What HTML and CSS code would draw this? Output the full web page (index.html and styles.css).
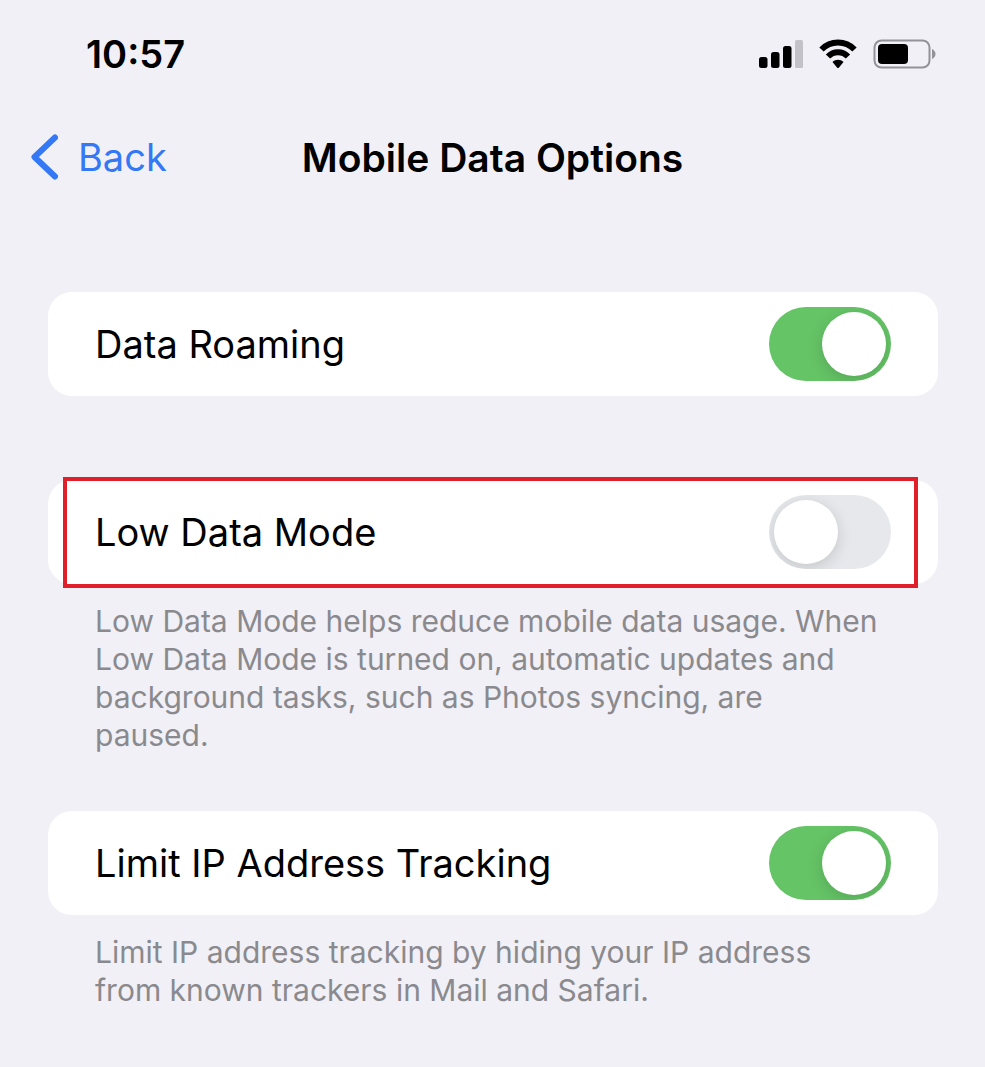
FILE: index.html
```html
<!DOCTYPE html>
<html lang="en">
<head>
    <meta charset="UTF-8">
    <meta name="viewport" content="width=device-width, initial-scale=1.0">
    <title>Mobile Data Options</title>
    <link rel="stylesheet" href="styles.css">
</head>
<body>
    <div class="status-bar">
        <time class="clock">10:57</time>
        <div class="status-icons">
            <svg class="signal" width="44" height="28" viewBox="0 0 44 28" aria-hidden="true">
                <rect x="0" y="17" width="8.500" height="11" rx="2.500"/>
                <rect x="12" y="12" width="8.500" height="16" rx="2.500"/>
                <rect x="24" y="6" width="8.500" height="22" rx="2.500"/>
                <rect class="signal-off" x="36" y="0" width="8" height="28" rx="1.500"/>
            </svg>
            <svg class="wifi" width="38" height="30" viewBox="0 0 38 30" aria-hidden="true">
                <path class="wifi-arc" d="M2.500 10.500 C11.500 1.200 26.500 1.200 35.500 10.500"/>
                <path class="wifi-arc" d="M9 17.500 C14.500 11.800 23.500 11.800 29 17.500"/>
                <path d="M13.500 23 C16.500 19.900 21.500 19.900 24.500 23 L20 28.500 Q19 29.500 18 28.500 Z"/>
            </svg>
            <svg class="battery" width="63" height="30" viewBox="0 0 63 30" aria-hidden="true">
                <rect class="battery-case" x="1.500" y="1.500" width="55" height="27" rx="7"/>
                <rect x="5" y="5" width="30" height="20" rx="4"/>
                <path class="battery-tip" d="M59 10 Q62.500 12 62.500 15 Q62.500 18 59 20 Z"/>
            </svg>
        </div>
    </div>

    <header class="nav-bar">
        <button type="button" class="back">
            <svg width="28" height="46" viewBox="0 0 28 46" aria-hidden="true">
                <path d="M25 3.500 L4.500 23 L25 42.500"/>
            </svg>
            Back
        </button>
        <h1>Mobile Data Options</h1>
    </header>

    <main class="settings">
        <section class="group">
            <div class="card">
                <label for="roaming">Data Roaming</label>
                <input type="checkbox" role="switch" class="switch" id="roaming" checked>
            </div>
        </section>

        <section class="group">
            <div class="card highlighted">
                <label for="low-data">Low Data Mode</label>
                <input type="checkbox" role="switch" class="switch" id="low-data">
            </div>
            <p class="note">Low Data Mode helps reduce mobile data usage. When Low Data Mode is turned on, automatic updates and background tasks, such as Photos syncing, are paused.</p>
        </section>

        <section class="group">
            <div class="card">
                <label for="limit-ip">Limit IP Address Tracking</label>
                <input type="checkbox" role="switch" class="switch" id="limit-ip" checked>
            </div>
            <p class="note">Limit IP address tracking by hiding your IP address from known trackers in Mail and Safari.</p>
        </section>
    </main>
</body>
</html>
```

FILE: styles.css
```css
* {
    box-sizing: border-box;
}
body {
    margin: 0;
    background-color: #f1f0f6;
    color: #000;
    font-family: Inter, "Liberation Sans", sans-serif;
    font-size: 38px;
}
.status-bar {
    display: flex;
    justify-content: space-between;
    align-items: center;
    height: 108px;
    padding: 0 49px 0 86px;
}
.clock {
    font-weight: 600;
}
.status-icons {
    display: flex;
    align-items: center;
    gap: 16px;
}
.signal-off {
    fill: #c3c2c8;
}
.wifi-arc {
    fill: none;
    stroke: #000;
    stroke-width: 6;
}
.battery-case {
    fill: none;
    stroke: #939298;
    stroke-width: 2;
}
.battery-tip {
    fill: #939298;
}
.nav-bar {
    display: grid;
    grid-template-columns: 1fr auto 1fr;
    align-items: center;
    height: 98px;
    padding: 0 30px;
}
.back {
    display: flex;
    justify-self: start;
    align-items: center;
    gap: 20px;
    padding: 0;
    border: none;
    background: none;
    color: #3478f6;
    font: inherit;
    cursor: pointer;
}
.back path {
    fill: none;
    stroke: #3478f6;
    stroke-width: 6;
    stroke-linecap: round;
    stroke-linejoin: round;
}
h1 {
    margin: 0;
    font-size: 39px;
    font-weight: 600;
}
.settings {
    padding: 86px 47px 48px 48px;
}
.group + .group {
    margin-top: 84px;
}
.group:has(.note) + .group {
    margin-top: 57px;
}
.card {
    position: relative;
    display: flex;
    justify-content: space-between;
    align-items: center;
    height: 104px;
    padding: 0 47px;
    border-radius: 24px;
    background-color: #fff;
}
.highlighted::after {
    content: "";
    position: absolute;
    inset: -3px 20px -4px 15px;
    border: 4px solid #e01f2b;
    pointer-events: none;
}
.switch {
    appearance: none;
    display: flex;
    width: 122px;
    height: 74px;
    margin: 0;
    padding: 5px;
    border-radius: 37px;
    background-color: #e7e8eb;
    overflow: hidden;
    cursor: pointer;
}
.switch::before {
    content: "";
    width: 64px;
    height: 64px;
    border-radius: 50%;
    background-color: #fff;
    box-shadow: 0 4px 16px rgba(0, 0, 0, 0.15);
}
.switch:checked {
    justify-content: flex-end;
    background-color: #65c466;
}
.note {
    margin: 0;
    padding: 18px 57px 0 47px;
    color: #8a8a8e;
    font-size: 30px;
    line-height: 38px;
}
```
